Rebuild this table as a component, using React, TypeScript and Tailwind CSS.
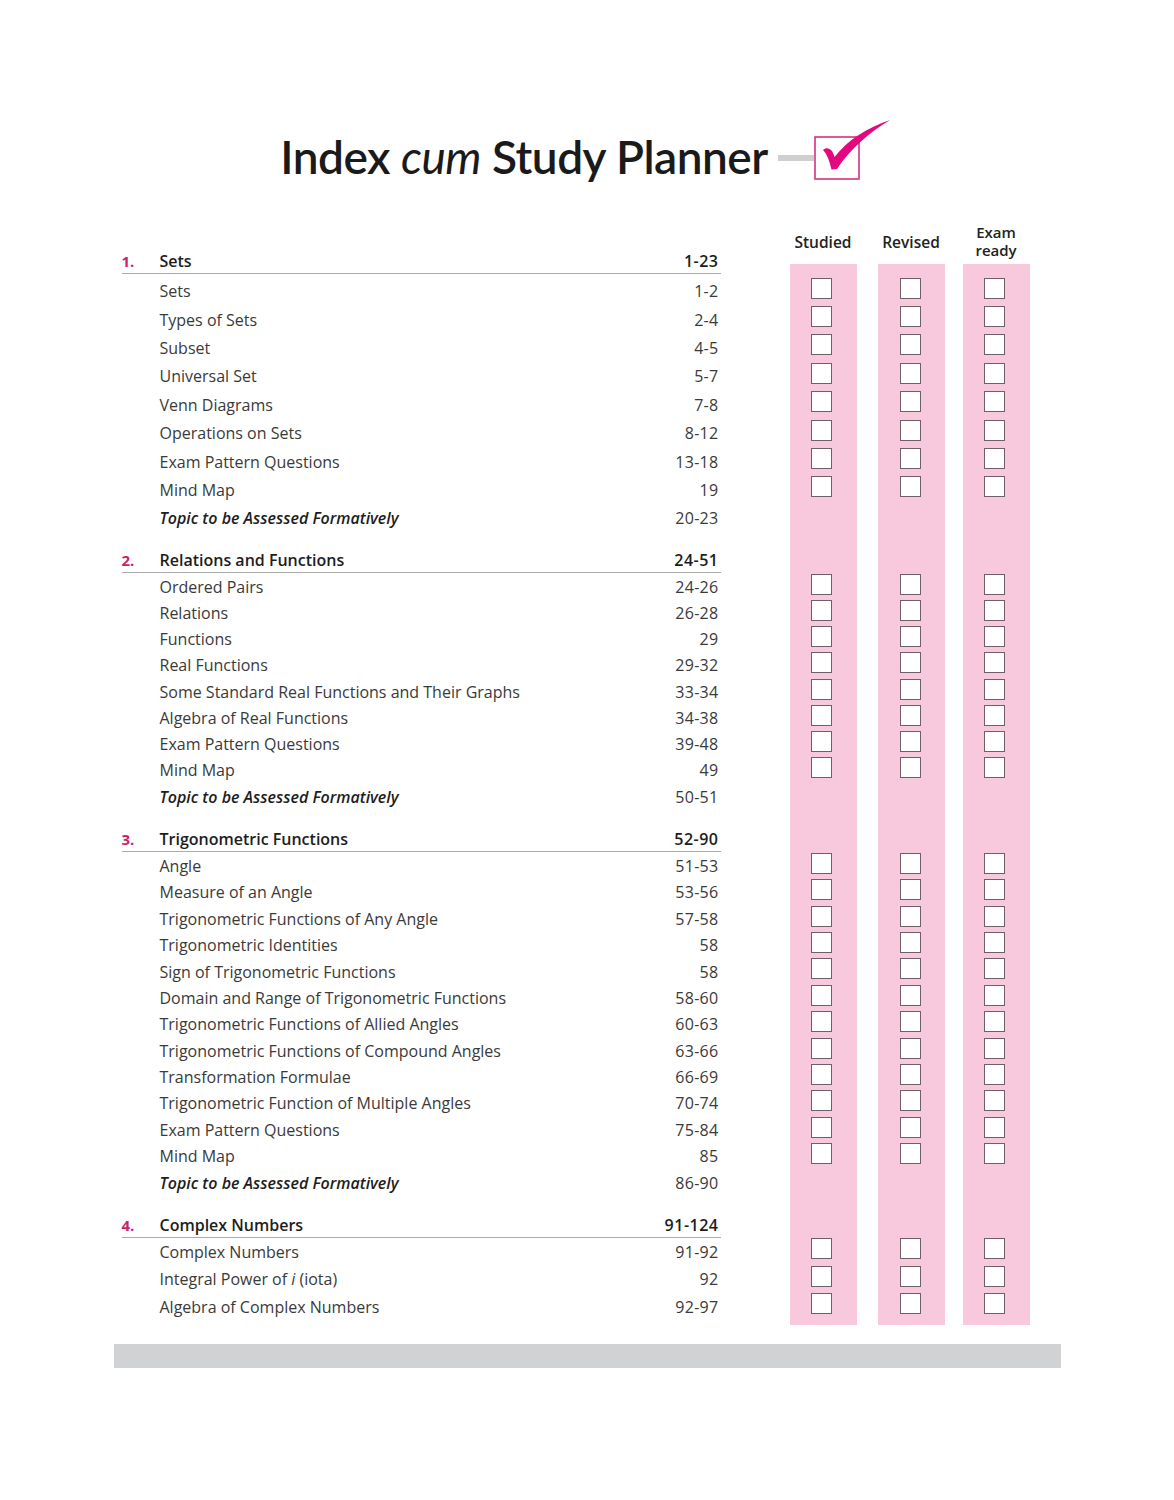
import type { ReactNode } from 'react';

type Item = { label: ReactNode; pages: string; topic?: boolean };
type Section = { n: string; title: string; pages: string; headH: string; rowH: string; padTop: string; items: Item[] };

const topic = (pages: string): Item => ({ label: 'Topic to be Assessed Formatively', pages, topic: true });

const sections: Section[] = [
  {
    n: '1.',
    title: 'Sets',
    pages: '1-23',
    headH: 'h-[22px]',
    rowH: 'h-[28.4px]',
    padTop: 'h-[3px]',
    items: [
      { label: 'Sets', pages: '1-2' },
      { label: 'Types of Sets', pages: '2-4' },
      { label: 'Subset', pages: '4-5' },
      { label: 'Universal Set', pages: '5-7' },
      { label: 'Venn Diagrams', pages: '7-8' },
      { label: 'Operations on Sets', pages: '8-12' },
      { label: 'Exam Pattern Questions', pages: '13-18' },
      { label: 'Mind Map', pages: '19' },
      topic('20-23'),
    ],
  },
  {
    n: '2.',
    title: 'Relations and Functions',
    pages: '24-51',
    headH: 'h-[40px]',
    rowH: 'h-[26.25px]',
    padTop: 'h-[1px]',
    items: [
      { label: 'Ordered Pairs', pages: '24-26' },
      { label: 'Relations', pages: '26-28' },
      { label: 'Functions', pages: '29' },
      { label: 'Real Functions', pages: '29-32' },
      { label: 'Some Standard Real Functions and Their Graphs', pages: '33-34' },
      { label: 'Algebra of Real Functions', pages: '34-38' },
      { label: 'Exam Pattern Questions', pages: '39-48' },
      { label: 'Mind Map', pages: '49' },
      topic('50-51'),
    ],
  },
  {
    n: '3.',
    title: 'Trigonometric Functions',
    pages: '52-90',
    headH: 'h-[42px]',
    rowH: 'h-[26.4px]',
    padTop: 'h-[1px]',
    items: [
      { label: 'Angle', pages: '51-53' },
      { label: 'Measure of an Angle', pages: '53-56' },
      { label: 'Trigonometric Functions of Any Angle', pages: '57-58' },
      { label: 'Trigonometric Identities', pages: '58' },
      { label: 'Sign of Trigonometric Functions', pages: '58' },
      { label: 'Domain and Range of  Trigonometric Functions', pages: '58-60' },
      { label: 'Trigonometric Functions of Allied Angles', pages: '60-63' },
      { label: 'Trigonometric Functions of Compound Angles', pages: '63-66' },
      { label: 'Transformation Formulae', pages: '66-69' },
      { label: 'Trigonometric Function of Multiple Angles', pages: '70-74' },
      { label: 'Exam Pattern Questions', pages: '75-84' },
      { label: 'Mind Map', pages: '85' },
      topic('86-90'),
    ],
  },
  {
    n: '4.',
    title: 'Complex Numbers',
    pages: '91-124',
    headH: 'h-[42px]',
    rowH: 'h-[27.5px]',
    padTop: 'h-0',
    items: [
      { label: 'Complex Numbers', pages: '91-92' },
      {
        label: (
          <>
            Integral Power of <i>i</i> (iota)
          </>
        ),
        pages: '92',
      },
      { label: 'Algebra of Complex Numbers', pages: '92-97' },
    ],
  },
];

// pink column offsets: Studied / Revised / Exam ready
const cols = [
  { ml: 'ml-0', pl: 'pl-[21px]' },
  { ml: 'ml-[21px]', pl: 'pl-[22px]' },
  { ml: 'ml-[18px]', pl: 'pl-[21px]' },
];

function Box() {
  return <div className="w-[21px] h-[21px] mb-[6px] border-[1.5px] border-[#6f5f68] bg-white" />;
}

function Cells({ check, gapTop }: { check?: boolean; gapTop?: boolean }) {
  return (
    <div className="ml-[69px] flex self-stretch">
      {cols.map((c) => (
        <div key={c.ml} className={`${c.ml} w-[67px] flex flex-col`}>
          {gapTop && <div className="h-[12px]" />}
          <div className={`flex-1 bg-[#f8c9dc] flex items-center ${c.pl}`}>{check && <Box />}</div>
        </div>
      ))}
    </div>
  );
}

function Logo() {
  return (
    <svg width="116" height="64" viewBox="0 0 116 64" className="ml-[10px] mt-[-14px]">
      <rect x="0" y="37" width="36" height="6" fill="#cfcfd0" />
      <rect x="37" y="19" width="44" height="42" fill="white" stroke="#d5307f" strokeWidth="1.6" />
      <path
        d="M45 32 C49 28.5 54 30 56.5 39 C69 23 88 10 112 2 C92 14 73 30 59 51 L53.5 51.5 C51.5 43 49 36 45 32 Z"
        fill="#e4087f"
      />
    </svg>
  );
}

export default function App() {
  return (
    <div className="min-h-[1500px] bg-white text-[#3a3a3a]" style={{ fontFamily: '"Open Sans", Lato, sans-serif' }}>
      <div className="w-[947px] mx-auto pt-[128px]">
        {/* Title */}
        <div className="flex items-center justify-center">
          <h1
            className="text-[46px] leading-[58px] font-semibold text-[#1a1a1a] tracking-[-0.5px]"
            style={{ fontFamily: 'Lato, sans-serif' }}
          >
            Index <span className="italic font-normal">cum</span> Study Planner
          </h1>
          <Logo />
        </div>

        {/* Column labels */}
        <div className="mt-[36px] pl-[8px] flex h-[30px]">
          <div className="w-[599px]" />
          <div className="ml-[69px] flex items-end text-[15.5px] font-semibold text-[#222] leading-[17px]">
            <div className="w-[67px] text-center pb-[1px]">Studied</div>
            <div className="ml-[21px] w-[67px] text-center pb-[1px]">Revised</div>
            <div className="ml-[18px] w-[67px] text-center text-[15px] leading-[18px] mb-[-7px]">
              Exam
              <br />
              ready
            </div>
          </div>
        </div>

        {/* Index rows */}
        <div className="pl-[8px]">
          {sections.map((s, si) => (
            <div key={s.n}>
              <div className={`flex ${s.headH}`}>
                <div className="w-[599px] flex items-end pb-[2px] border-b-[1.5px] border-[#ababab] text-[16px] leading-5 font-semibold text-[#1d1d1d]">
                  <span className="w-[38px] text-[#c7246d] text-[15px] font-bold">{s.n}</span>
                  <span className="flex-1">{s.title}</span>
                  <span className="pr-[2px] tracking-[0.5px]">{s.pages}</span>
                </div>
                <Cells gapTop={si === 0} />
              </div>
              <div className={`flex ${s.padTop}`}>
                <div className="w-[599px]" />
                <Cells />
              </div>
              {s.items.map((it) => (
                <div key={it.pages + String(it.topic)} className={`flex ${s.rowH}`}>
                  <div className="w-[599px] pl-[38px] flex items-center text-[16px] leading-5">
                    <span className={`flex-1 ${it.topic ? 'italic font-semibold text-[#1d1d1d]' : ''}`}>{it.label}</span>
                    <span className="pr-[2px] tracking-[0.3px]">{it.pages}</span>
                  </div>
                  <Cells check={!it.topic} />
                </div>
              ))}
            </div>
          ))}
          <div className="flex h-[4.5px]">
            <div className="w-[599px]" />
            <Cells />
          </div>
        </div>

        {/* Footer bar */}
        <div className="mt-[19px] h-[24px] bg-[#d1d2d4]" />
      </div>
    </div>
  );
}
